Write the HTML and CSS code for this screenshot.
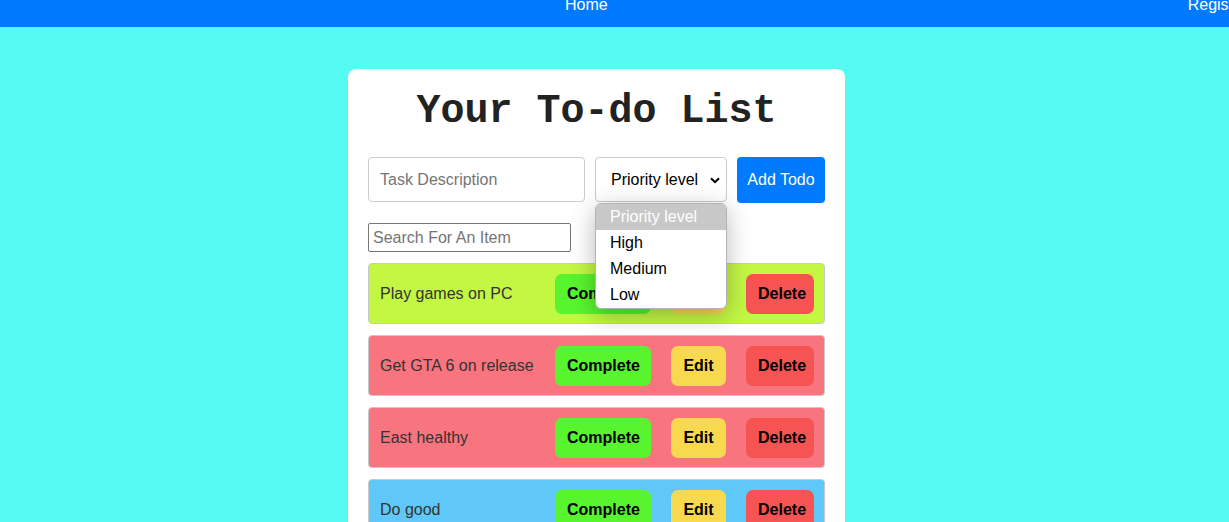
FILE: index.html
```html
<!DOCTYPE html>
<html lang="en">
<head>
<meta charset="utf-8">
<title>Your To-do List</title>
<link rel="stylesheet" href="styles.css">
</head>
<body>
<nav class="topnav">
  <a class="navlink" href="#">Home</a>
  <a class="navlink" href="#">Register</a>
</nav>
<main class="card">
  <h1 class="title">Your To-do List</h1>
  <div class="addrow">
    <input class="task-input" type="text" placeholder="Task Description">
    <div class="select-wrap">
      <div class="select-box">
        <span>Priority level</span>
        <svg class="chev" width="10" height="7" viewBox="0 0 10 7"><path d="M1 1.2 L5 5.2 L9 1.2" fill="none" stroke="#000" stroke-width="2"/></svg>
      </div>
      <ul class="dropdown">
        <li class="opt opt-active">Priority level</li>
        <li class="opt">High</li>
        <li class="opt">Medium</li>
        <li class="opt">Low</li>
      </ul>
    </div>
    <button class="add-btn">Add Todo</button>
  </div>
  <input class="search" type="text" placeholder="Search For An Item">
  <ul class="todos">
    <li class="todo todo-low">
      <span class="todo-text">Play games on PC</span>
      <div class="actions">
        <button class="btn btn-complete">Complete</button>
        <button class="btn btn-edit">Edit</button>
        <button class="btn btn-delete">Delete</button>
      </div>
    </li>
    <li class="todo todo-high">
      <span class="todo-text">Get GTA 6 on release</span>
      <div class="actions">
        <button class="btn btn-complete">Complete</button>
        <button class="btn btn-edit">Edit</button>
        <button class="btn btn-delete">Delete</button>
      </div>
    </li>
    <li class="todo todo-high">
      <span class="todo-text">East healthy</span>
      <div class="actions">
        <button class="btn btn-complete">Complete</button>
        <button class="btn btn-edit">Edit</button>
        <button class="btn btn-delete">Delete</button>
      </div>
    </li>
    <li class="todo todo-medium">
      <span class="todo-text">Do good</span>
      <div class="actions">
        <button class="btn btn-complete">Complete</button>
        <button class="btn btn-edit">Edit</button>
        <button class="btn btn-delete">Delete</button>
      </div>
    </li>
  </ul>
</main>
</body>
</html>
```
FILE: styles.css
```css
html, body {
  margin: 0;
  padding: 0;
}
body {
  background: #55faf2;
  font-family: "Liberation Sans", Arial, sans-serif;
  font-size: 16px;
  overflow: hidden;
  height: 522px;
}
.topnav {
  background: #007bff;
  height: 27px;
  display: flex;
  gap: 580px;
  padding-left: 565px;
  overflow: hidden;
  white-space: nowrap;
}
.navlink {
  color: #fff;
  text-decoration: none;
  font-size: 16px;
  line-height: 18px;
  margin-top: -4px;
}
.card {
  background: #fff;
  width: 457px;
  margin: 42px 0 0 348px;
  padding: 20px;
  border-radius: 8px;
}
.title {
  font-family: "Liberation Mono", "Courier New", monospace;
  font-weight: bold;
  font-size: 40px;
  line-height: 45px;
  text-align: center;
  color: #222;
  margin: 0 0 23px;
}
.addrow {
  display: flex;
  gap: 10px;
  align-items: flex-start;
}
.task-input {
  box-sizing: border-box;
  width: 217px;
  height: 45px;
  border: 1px solid #ccc;
  border-radius: 4px;
  padding: 0 11px;
  font-family: inherit;
  font-size: 16px;
  color: #333;
}
.task-input::placeholder { color: #757575; }
.select-wrap {
  position: relative;
}
.select-box {
  box-sizing: border-box;
  width: 132px;
  height: 45px;
  border: 1px solid #ccc;
  border-radius: 4px;
  display: flex;
  align-items: center;
  justify-content: space-between;
  padding: 0 6px 0 15px;
  color: #000;
  background: #fff;
}
.chev { margin-top: 1px; }
.dropdown {
  position: absolute;
  left: 0;
  top: 46px;
  width: 132px;
  box-sizing: border-box;
  margin: 0;
  padding: 0;
  list-style: none;
  background: #fff;
  border: 1px solid #b4b4b4;
  border-radius: 6px;
  box-shadow: 0 6px 24px rgba(0,0,0,0.28);
  overflow: hidden;
  z-index: 10;
}
.opt {
  height: 26px;
  line-height: 26px;
  padding-left: 14px;
  color: #000;
}
.opt-active {
  background: #c8c8c8;
  color: #fff;
}
.add-btn {
  height: 46px;
  width: 88px;
  border: none;
  border-radius: 4px;
  background: #007bff;
  color: #fff;
  font-family: inherit;
  font-size: 16px;
  padding: 0;
}
.search {
  display: block;
  box-sizing: border-box;
  width: 203px;
  height: 29px;
  margin-top: 20px;
  border: 1px solid #767676;
  border-radius: 2px;
  padding: 0 4px;
  font-family: inherit;
  font-size: 16px;
}
.search::placeholder { color: #757575; }
.todos {
  list-style: none;
  margin: 11px 0 0;
  padding: 0;
  display: flex;
  flex-direction: column;
  gap: 11px;
}
.todo {
  box-sizing: border-box;
  height: 61px;
  border: 1px solid #c8c8c8;
  border-radius: 4px;
  display: flex;
  align-items: center;
  justify-content: space-between;
  padding: 0 10px 0 11px;
}
.todo-low { background: #c2f744; }
.todo-high { background: #f8757f; }
.todo-medium { background: #5fc8f8; }
.todo-text {
  color: #333;
  font-size: 16px;
}
.actions {
  display: flex;
  gap: 20px;
}
.btn {
  height: 40px;
  border: none;
  border-radius: 7px;
  font-family: inherit;
  font-weight: bold;
  font-size: 16px;
  color: #000;
  padding: 0 12px;
}
.btn-complete { background: #58f52e; width: 96px; }
.btn-edit { background: #f7d94f; width: 55px; }
.btn-delete { background: #f75353; width: 68px; }
```
